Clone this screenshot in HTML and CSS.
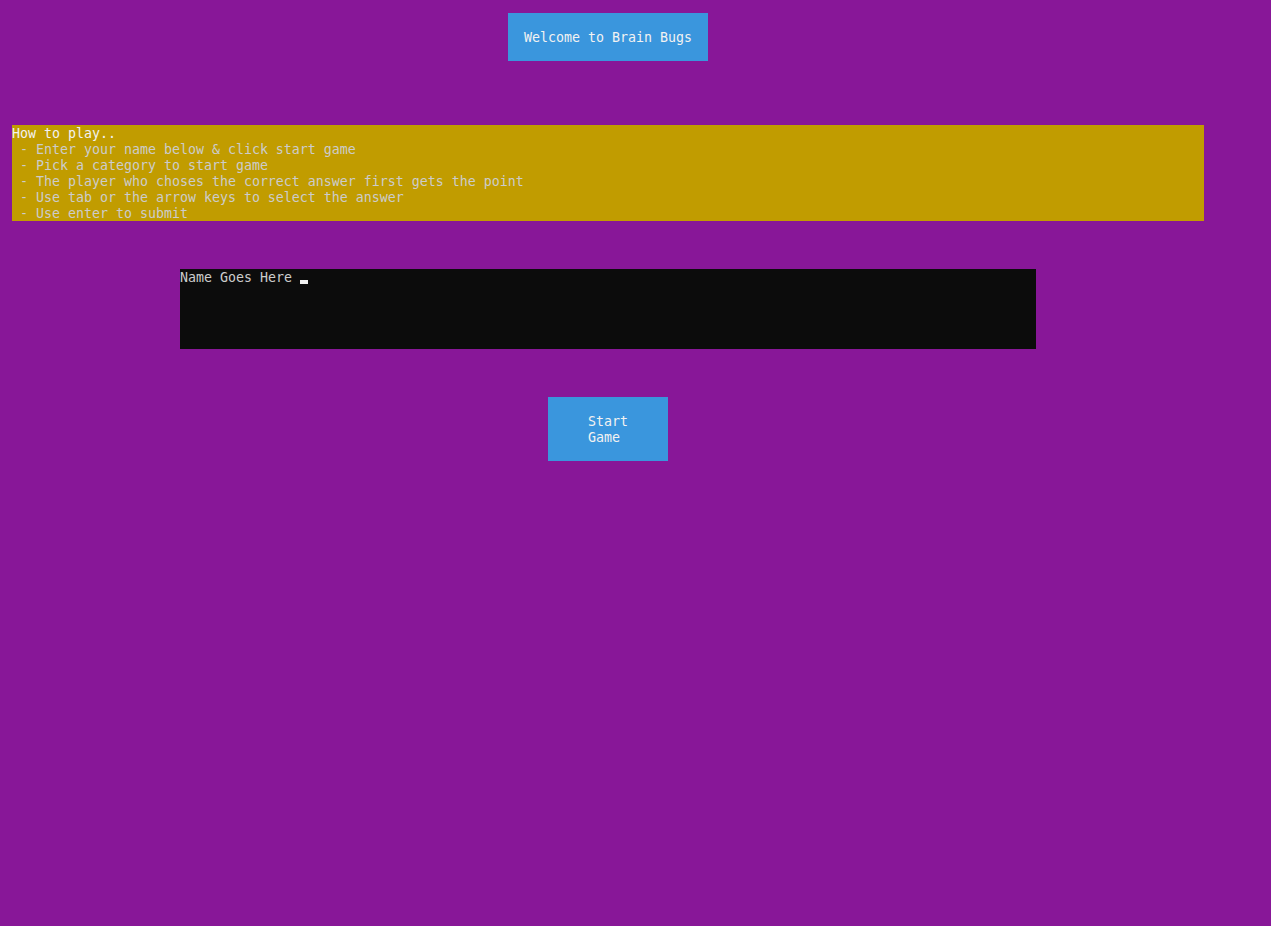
FILE: index.html
```html
<!DOCTYPE html>
<html>
<head>
<meta charset="utf-8">
<link rel="stylesheet" href="styles.css">
</head>
<body>
<div class="screen">
  <div class="title">Welcome to Brain Bugs</div>
  <div class="help"><span class="help-head">How to play..</span>
 - Enter your name below &amp; click start game
 - Pick a category to start game
 - The player who choses the correct answer first gets the point
 - Use tab or the arrow keys to select the answer
 - Use enter to submit</div>
  <div class="name">Name Goes Here <span class="cursor"></span></div>
  <div class="start">Start<br>Game</div>
</div>
</body>
</html>
```
FILE: styles.css
```css
html, body {
  margin: 0;
  padding: 0;
  background: #881798;
  height: 100%;
}
body {
  font-family: "DejaVu Sans Mono", "Liberation Mono", monospace;
  font-size: 13.29px;
  line-height: 16px;
  color: #cccccc;
}
.screen {
  width: 1192px;
  padding: 13px 12px;
  display: flex;
  flex-direction: column;
  align-items: center;
}
.title {
  box-sizing: border-box;
  width: 200px;
  height: 48px;
  padding: 17px 16px 15px;
  background: #3a96dd;
  color: #f2f2f2;
  white-space: pre;
}
.help {
  box-sizing: border-box;
  align-self: stretch;
  margin-top: 64px;
  height: 96px;
  padding-top: 1px;
  background: #c19c00;
  color: #cccccc;
  white-space: pre;
  overflow: hidden;
}
.help-head {
  color: #f2f2f2;
}
.name {
  box-sizing: border-box;
  margin-top: 48px;
  width: 856px;
  height: 80px;
  padding-top: 1px;
  background: #0c0c0c;
  color: #cccccc;
  white-space: pre;
}
.cursor {
  display: inline-block;
  width: 8px;
  height: 4px;
  background: #f2f2f2;
  vertical-align: -2px;
}
.start {
  box-sizing: border-box;
  margin-top: 48px;
  width: 120px;
  height: 64px;
  padding: 17px 40px 15px;
  background: #3a96dd;
  color: #f2f2f2;
}
```
